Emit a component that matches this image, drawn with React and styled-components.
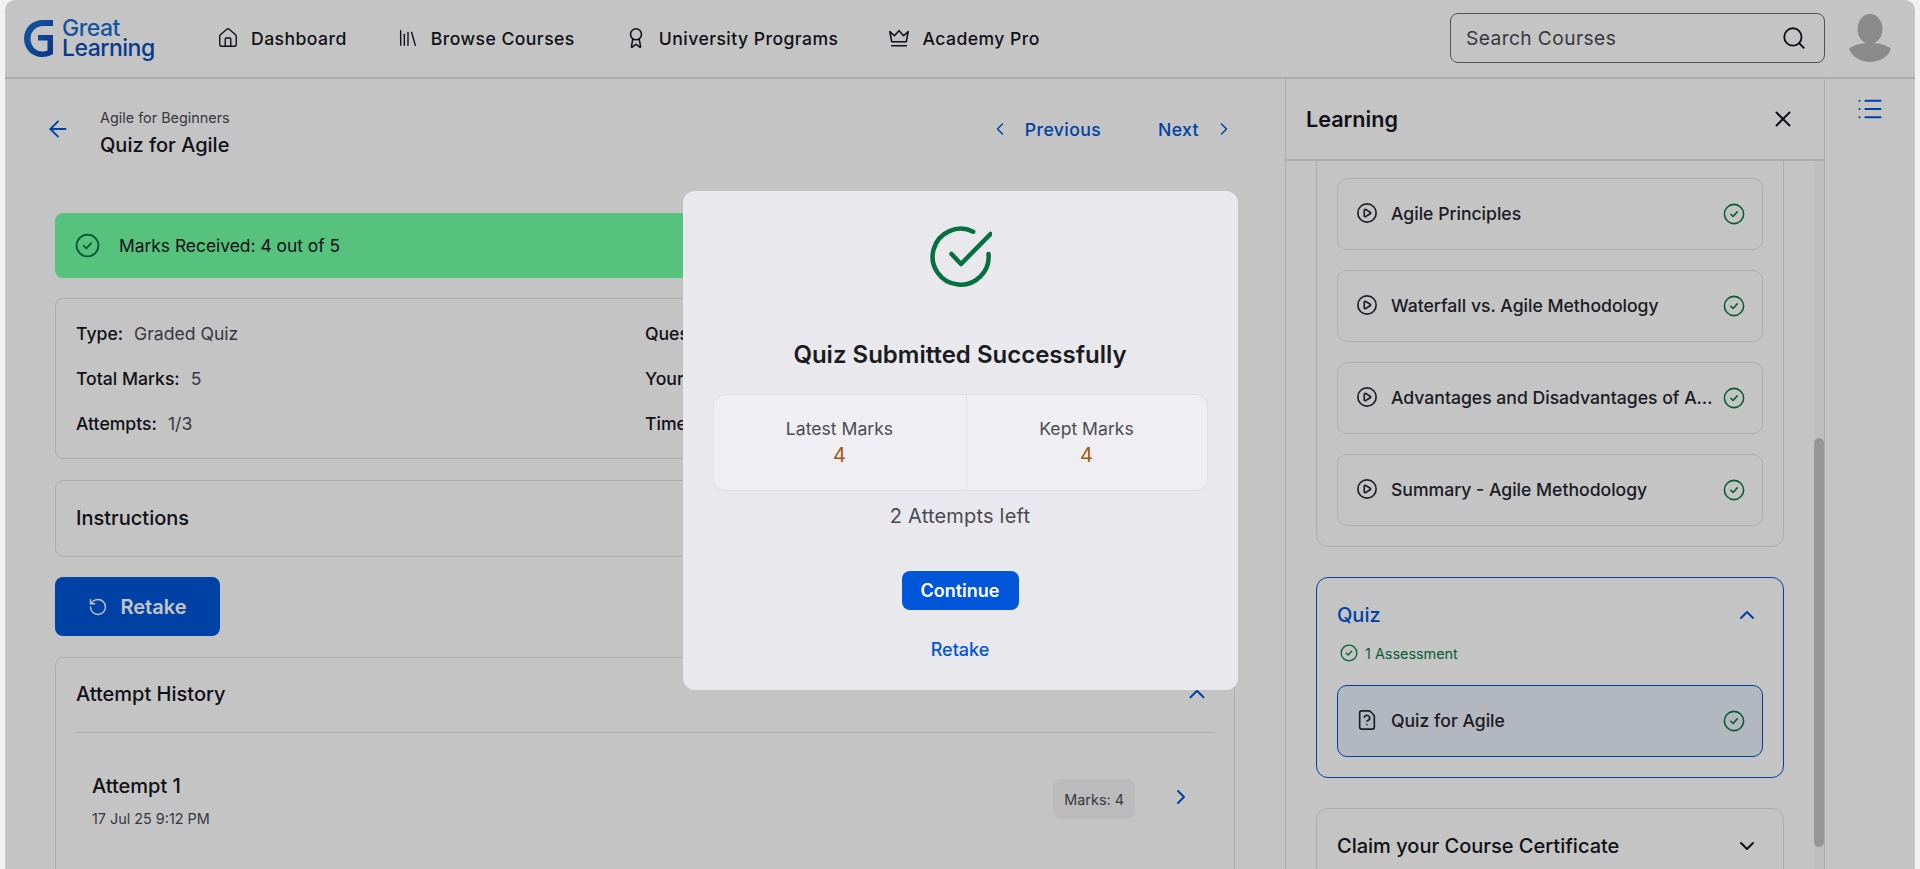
import React from "react";
import styled, { createGlobalStyle } from "styled-components";
import {
  ArrowLeft,
  Award,
  ChevronDown,
  ChevronLeft,
  ChevronRight,
  ChevronUp,
  CirclePlay,
  FileQuestion,
  House,
  Library,
  List,
  RotateCcw,
  Search,
  X,
} from "lucide-react";

const BLUE = "#0055d9";
const GREEN = "#0a7a45";
const INK = "#16161d";
const MUTED = "#4a4a55";
const LINE = "#e2e2e6";

const GlobalStyle = createGlobalStyle`
  html, body {
    margin: 0;
    height: 100%;
    overflow: hidden;
    background: #f2f2f2;
    font-family: Inter, "Liberation Sans", sans-serif;
    color: ${INK};
  }
  * {
    box-sizing: border-box;
  }
`;

const Frame = styled.div`
  position: relative;
  display: flex;
  flex-direction: column;
  height: 869px;
  margin: 0 5px;
  background: #fff;
  border-radius: 10px 10px 0 0;
  overflow: hidden;
`;

const Header = styled.header`
  display: flex;
  align-items: center;
  flex: 0 0 79px;
  padding: 0 23px 1px 19px;
  border-bottom: 2px solid ${LINE};
`;

const LogoWrap = styled.div`
  display: flex;
  align-items: center;
  gap: 8px;
  width: 193px;
`;

const LogoText = styled.div`
  display: flex;
  flex-direction: column;
  font-size: 23px;
  line-height: 20px;
  font-weight: 500;
  letter-spacing: -0.5px;
`;

const LogoGreat = styled.span`
  color: #1a6fd0;
`;

const LogoLearning = styled.span`
  color: #0a4cb8;
`;

const Nav = styled.nav`
  display: flex;
  align-items: center;
  gap: 50px;
`;

const NavLink = styled.a`
  display: flex;
  align-items: center;
  gap: 12px;
  font-size: 17.6px;
  font-weight: 500;
  letter-spacing: 0.45px;
  color: ${INK};
`;

const SearchBox = styled.div`
  display: flex;
  align-items: center;
  justify-content: space-between;
  width: 375px;
  height: 50px;
  margin-left: auto;
  padding: 0 17px 0 15px;
  border: 1px solid #6a6a75;
  border-radius: 8px;
  font-size: 19.2px;
  letter-spacing: 0.4px;
  color: ${MUTED};
`;

const AvatarSlot = styled.div`
  display: flex;
  margin-left: 23px;
`;

const Content = styled.div`
  display: flex;
  flex: 1;
  min-height: 0;
`;

const Main = styled.main`
  flex: 1;
  min-width: 0;
  overflow: hidden;
  padding: 0 50px;
`;

const TopBar = styled.div`
  display: flex;
  align-items: center;
  height: 100px;
  margin-bottom: 34px;
`;

const BackSlot = styled.div`
  display: flex;
  width: 55px;
  margin-left: -10px;
  color: ${BLUE};
`;

const Crumb = styled.div`
  margin-top: 6px;
  font-size: 14.4px;
  line-height: 20px;
  color: ${MUTED};
`;

const PageTitle = styled.div`
  margin-top: 5px;
  font-size: 20px;
  line-height: 24px;
  font-weight: 500;
`;

const Pager = styled.div`
  display: flex;
  align-items: center;
  gap: 57px;
  margin-left: auto;
  margin-right: 1px;
`;

const PagerLink = styled.a`
  display: flex;
  align-items: center;
  gap: 15px;
  font-size: 17.6px;
  font-weight: 500;
  letter-spacing: 0.4px;
  color: ${BLUE};
`;

const Banner = styled.div`
  display: flex;
  align-items: center;
  gap: 19px;
  height: 65px;
  padding: 0 20px;
  background: #71fda5;
  border-radius: 8px;
  font-size: 17.4px;
`;

const Card = styled.section`
  margin-top: ${(p) => p.$top || 20}px;
  border: 1px solid ${LINE};
  border-radius: 8px;
`;

const DetailGrid = styled.div`
  display: grid;
  grid-template-columns: 1fr 1fr;
  grid-auto-rows: 45px;
  align-items: center;
  padding: 12px 20px;
`;

const Detail = styled.div`
  display: flex;
  gap: 11px;
  font-size: 17.6px;
  font-weight: 500;
`;

const DetailValue = styled.span`
  font-weight: 400;
  color: ${MUTED};
`;

const CardHead = styled.div`
  display: flex;
  align-items: center;
  justify-content: space-between;
  height: ${(p) => p.$height || 75}px;
  padding: 0 24px 2px 20px;
  font-size: 20px;
  font-weight: 500;
`;

const RetakeButton = styled.button`
  display: flex;
  align-items: center;
  justify-content: center;
  gap: 12px;
  width: 165px;
  height: 59px;
  margin-top: 20px;
  border: 0;
  border-radius: 8px;
  background: ${BLUE};
  color: #fff;
  font: 600 20px Inter, sans-serif;
`;

const HistoryBody = styled.div`
  margin: 0 20px;
  padding: 41px 16px 200px;
  border-top: 1px solid ${LINE};
`;

const AttemptRow = styled.div`
  display: flex;
  align-items: center;
`;

const AttemptName = styled.div`
  font-size: 20px;
  line-height: 24px;
  font-weight: 500;
`;

const AttemptDate = styled.div`
  margin-top: 11px;
  font-size: 14.4px;
  line-height: 20px;
  color: ${MUTED};
`;

const MarksPill = styled.div`
  display: flex;
  align-items: center;
  height: 40px;
  margin: -5px 0 0 auto;
  padding: 0 11px;
  border-radius: 8px;
  background: #f4f4f4;
  font-size: 14.4px;
  color: ${MUTED};
`;

const RowArrow = styled.div`
  display: flex;
  margin: -9px 5px 0 34px;
  color: ${BLUE};
`;

const Sidebar = styled.aside`
  display: flex;
  flex-direction: column;
  flex: 0 0 540px;
  min-width: 0;
  border-left: 1px solid ${LINE};
  border-right: 1px solid ${LINE};
`;

const SideHead = styled.div`
  display: flex;
  align-items: center;
  justify-content: space-between;
  flex: 0 0 82px;
  padding: 0 28px 0 20px;
  border-bottom: 2px solid ${LINE};
  font-size: 21.6px;
  font-weight: 600;
`;

const SideBody = styled.div`
  position: relative;
  flex: 1;
  min-height: 0;
  overflow: hidden;
  padding: 0 40px 0 30px;
`;

const ScrollTrack = styled.div`
  position: absolute;
  top: 0;
  right: 0;
  bottom: 0;
  width: 10px;
  background: #f9f9f9;
`;

const ScrollThumb = styled.div`
  position: absolute;
  top: 277px;
  right: 0;
  width: 10px;
  height: 409px;
  border-radius: 5px;
  background: #c3c3c3;
`;

const Group = styled.div`
  margin-top: ${(p) => p.$top}px;
  padding: ${(p) => p.$pad};
  border: 1px solid ${(p) => (p.$active ? BLUE : LINE)};
  border-radius: 12px;
`;

const GroupHead = styled.div`
  display: flex;
  align-items: center;
  justify-content: space-between;
  height: 28px;
  padding-right: 4px;
  font-size: 20px;
  font-weight: 500;
  color: ${(p) => (p.$active ? BLUE : INK)};
`;

const GroupMeta = styled.div`
  display: flex;
  align-items: center;
  gap: 7px;
  height: 20px;
  margin: 14px 0 22px 3px;
  font-size: 14.4px;
  color: ${GREEN};
`;

const ItemStack = styled.div`
  display: flex;
  flex-direction: column;
  gap: 20px;
`;

const Item = styled.div`
  display: flex;
  align-items: center;
  height: 72px;
  padding: 0 17px 0 18px;
  border: 1px solid ${(p) => (p.$active ? BLUE : LINE)};
  border-radius: 10px;
  background: ${(p) => (p.$active ? "#e8eefa" : "transparent")};
  font-size: 17.6px;
  font-weight: 500;
  color: #26262e;
`;

const ItemIcon = styled.span`
  display: flex;
  margin-right: 13px;
  margin-top: -3px;
`;

const ItemLabel = styled.span`
  flex: 1;
  min-width: 0;
  margin-top: -2px;
  overflow: hidden;
  white-space: nowrap;
  text-overflow: ellipsis;
`;

const ItemCheck = styled.span`
  display: flex;
  margin-left: 8px;
`;

const Rail = styled.div`
  flex: 0 0 90px;
  display: flex;
  justify-content: center;
  padding-top: 16px;
  color: ${BLUE};
`;

const Overlay = styled.div`
  position: fixed;
  inset: 0 5px;
  display: flex;
  align-items: center;
  justify-content: center;
  padding-top: 11px;
  background: rgba(0, 0, 0, 0.23);
  border-radius: 10px 10px 0 0;
`;

const Modal = styled.div`
  display: flex;
  flex-direction: column;
  align-items: center;
  width: 555px;
  height: 499px;
  padding: 34px 30px 0;
  background: #e9e8ec;
  border-radius: 12px;
`;

const ModalTitle = styled.h2`
  margin: 50px 0 0;
  font-size: 24px;
  line-height: 32px;
  font-weight: 600;
  color: #1b1b22;
`;

const Stats = styled.div`
  display: grid;
  grid-template-columns: 252px 1fr;
  width: 100%;
  height: 97px;
  margin-top: 23px;
  background: #efeef3;
  border: 1px solid #dfdee3;
  border-radius: 12px;
`;

const Stat = styled.div`
  display: flex;
  flex-direction: column;
  align-items: center;
  padding-top: 23px;
  font-size: 17.6px;
  line-height: 22px;
  color: ${MUTED};

  & + & {
    border-left: 1px solid #dfdee3;
  }
`;

const StatValue = styled.span`
  margin-top: 3px;
  font-size: 20px;
  line-height: 24px;
  color: #9a5b0c;
`;

const AttemptsLeft = styled.div`
  margin-top: 13px;
  font-size: 20px;
  line-height: 24px;
  letter-spacing: 0.2px;
  color: ${MUTED};
`;

const ContinueButton = styled.button`
  width: 117px;
  height: 39px;
  margin-top: 43px;
  border: 0;
  border-radius: 8px;
  background: ${BLUE};
  color: #fff;
  font: 600 18px Inter, sans-serif;
`;

const ModalLink = styled.a`
  margin-top: 29px;
  font-size: 18px;
  line-height: 22px;
  font-weight: 500;
  color: ${BLUE};
`;

const LogoMark = () => (
  <svg width="30" height="37" viewBox="0 0 30 37" aria-hidden="true">
    <defs>
      <linearGradient id="logoG" x1="0" y1="0" x2="1" y2="1">
        <stop offset="0" stopColor="#1c74d8" />
        <stop offset="1" stopColor="#0a45ad" />
      </linearGradient>
    </defs>
    <path
      fill="url(#logoG)"
      d="M29 0H19C8 0 0 8 0 18.5S8 37 18 37c4 0 8-1 11-3V15H14v5.5h9.5v10c-1.5.7-3.5 1-5.5 1-6.500 0-11.500-6-11.500-13S12 6 19.500 6H29z"
    />
  </svg>
);

const CrownIcon = () => (
  <svg width="22" height="22" viewBox="0 0 24 24" fill="none" stroke="currentColor" strokeWidth="1.7" strokeLinejoin="round" strokeLinecap="round" aria-hidden="true">
    <path d="M2 5l5 4.5L12 4l5 5.5L22 5l-2 11H4z" />
    <path d="M4 20.5h16" />
  </svg>
);

const Avatar = () => (
  <svg width="44" height="48" viewBox="0 0 44 48" aria-hidden="true">
    <ellipse cx="22" cy="15" rx="12.5" ry="15" fill="#b4b4b4" />
    <path d="M1 35c4-4 12-6 21-6s17 2 21 6c-3 8-12 13-21 13S4 43 1 35z" fill="#b4b4b4" />
  </svg>
);

const CheckCircle = ({ size = 20, color = GREEN }) => (
  <svg width={size} height={size} viewBox="0 0 24 24" fill="none" stroke={color} strokeWidth="1.7" strokeLinecap="round" strokeLinejoin="round" aria-hidden="true">
    <circle cx="12" cy="12" r="10.5" />
    <path d="M8.5 12.3l2.5 2.4 4.5-5" />
  </svg>
);

const SuccessMark = () => (
  <svg width="64" height="64" viewBox="0 0 64 64" fill="none" stroke="#067041" strokeWidth="4.5" strokeLinecap="round" strokeLinejoin="round" aria-hidden="true">
    <path d="M60.5 29A28 28 0 1 1 45.2 6.7" />
    <path d="M23.5 29l9.5 10L62.5 9" />
  </svg>
);

const ProgressItem = ({ label, active, icon: Icon = CirclePlay }) => (
  <Item $active={active}>
    <ItemIcon>
      <Icon size={22} strokeWidth={1.8} />
    </ItemIcon>
    <ItemLabel>{label}</ItemLabel>
    <ItemCheck>
      <CheckCircle size={22} />
    </ItemCheck>
  </Item>
);

const navItems = [
  { label: "Dashboard", icon: <House size={22} strokeWidth={1.5} /> },
  { label: "Browse Courses", icon: <Library size={22} strokeWidth={1.5} /> },
  { label: "University Programs", icon: <Award size={22} strokeWidth={1.7} /> },
  { label: "Academy Pro", icon: <CrownIcon /> },
];

const lessons = [
  "Agile Principles",
  "Waterfall vs. Agile Methodology",
  "Advantages and Disadvantages of Agile Methodology",
  "Summary - Agile Methodology",
];

const App = () => {
  return (
    <>
      <GlobalStyle />
      <Frame>
        <Header>
          <LogoWrap>
            <LogoMark />
            <LogoText>
              <LogoGreat>Great</LogoGreat>
              <LogoLearning>Learning</LogoLearning>
            </LogoText>
          </LogoWrap>
          <Nav>
            {navItems.map((item) => (
              <NavLink key={item.label}>
                {item.icon}
                {item.label}
              </NavLink>
            ))}
          </Nav>
          <SearchBox>
            Search Courses
            <Search size={26} strokeWidth={1.7} color={INK} />
          </SearchBox>
          <AvatarSlot>
            <Avatar />
          </AvatarSlot>
        </Header>

        <Content>
          <Main>
            <TopBar>
              <BackSlot>
                <ArrowLeft size={26} strokeWidth={1.7} />
              </BackSlot>
              <div>
                <Crumb>Agile for Beginners</Crumb>
                <PageTitle>Quiz for Agile</PageTitle>
              </div>
              <Pager>
                <PagerLink>
                  <ChevronLeft size={20} strokeWidth={1.8} />
                  Previous
                </PagerLink>
                <PagerLink>
                  Next
                  <ChevronRight size={20} strokeWidth={1.8} />
                </PagerLink>
              </Pager>
            </TopBar>

            <Banner>
              <CheckCircle size={25} color="#067041" />
              Marks Received: 4 out of 5
            </Banner>

            <Card>
              <DetailGrid>
                <Detail>Type:<DetailValue>Graded Quiz</DetailValue></Detail>
                <Detail>Questions:<DetailValue>5</DetailValue></Detail>
                <Detail>Total Marks:<DetailValue>5</DetailValue></Detail>
                <Detail>Your Marks:<DetailValue>4</DetailValue></Detail>
                <Detail>Attempts:<DetailValue>1/3</DetailValue></Detail>
                <Detail>Time:<DetailValue>1 min</DetailValue></Detail>
              </DetailGrid>
            </Card>

            <Card $top={21}>
              <CardHead>Instructions</CardHead>
            </Card>

            <RetakeButton>
              <RotateCcw size={20} strokeWidth={1.7} />
              Retake
            </RetakeButton>

            <Card $top={21}>
              <CardHead $height={74}>
                Attempt History
                <ChevronUp size={26} strokeWidth={1.8} color={BLUE} />
              </CardHead>
              <HistoryBody>
                <AttemptRow>
                  <div>
                    <AttemptName>Attempt 1</AttemptName>
                    <AttemptDate>17 Jul 25 9:12 PM</AttemptDate>
                  </div>
                  <MarksPill>Marks: 4</MarksPill>
                  <RowArrow>
                    <ChevronRight size={24} strokeWidth={2} />
                  </RowArrow>
                </AttemptRow>
              </HistoryBody>
            </Card>
          </Main>

          <Sidebar>
            <SideHead>
              Learning
              <X size={26} strokeWidth={1.8} />
            </SideHead>
            <SideBody>
              <ScrollTrack />
              <ScrollThumb />
              <Group $top={-20} $pad="36px 20px 20px">
                <ItemStack>
                  {lessons.map((label) => (
                    <ProgressItem key={label} label={label} />
                  ))}
                </ItemStack>
              </Group>
              <Group $top={30} $active $pad="23px 20px 20px">
                <GroupHead $active>
                  Quiz
                  <ChevronUp size={24} strokeWidth={2} />
                </GroupHead>
                <GroupMeta>
                  <CheckCircle size={18} />1 Assessment
                </GroupMeta>
                <ProgressItem label="Quiz for Agile" icon={FileQuestion} active />
              </Group>
              <Group $top={30} $pad="23px 20px">
                <GroupHead>
                  Claim your Course Certificate
                  <ChevronDown size={24} strokeWidth={2} />
                </GroupHead>
              </Group>
            </SideBody>
          </Sidebar>

          <Rail>
            <List size={28} strokeWidth={1.7} />
          </Rail>
        </Content>
      </Frame>

      <Overlay>
        <Modal>
          <SuccessMark />
          <ModalTitle>Quiz Submitted Successfully</ModalTitle>
          <Stats>
            <Stat>
              Latest Marks
              <StatValue>4</StatValue>
            </Stat>
            <Stat>
              Kept Marks
              <StatValue>4</StatValue>
            </Stat>
          </Stats>
          <AttemptsLeft>2 Attempts left</AttemptsLeft>
          <ContinueButton>Continue</ContinueButton>
          <ModalLink>Retake</ModalLink>
        </Modal>
      </Overlay>
    </>
  );
};

export default App;
